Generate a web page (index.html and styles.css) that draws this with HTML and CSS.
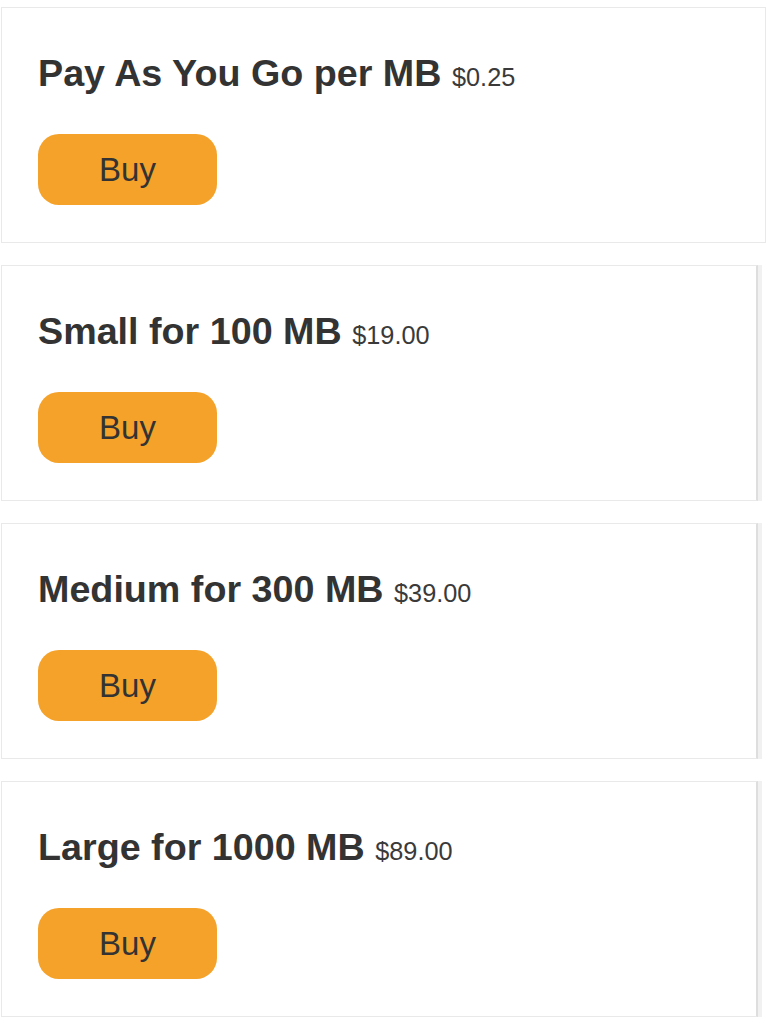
FILE: index.html
```html
<!DOCTYPE html>
<html lang="en">
<head>
<meta charset="utf-8">
<title>Data Plans</title>
<link rel="stylesheet" href="styles.css">
</head>
<body>
<main class="plans">
  <section class="plan">
    <h2 class="plan-title">Pay As You Go per MB <span class="plan-price">$0.25</span></h2>
    <button class="buy">Buy</button>
  </section>
  <section class="plan plan-scrolled">
    <h2 class="plan-title">Small for 100 MB <span class="plan-price">$19.00</span></h2>
    <button class="buy">Buy</button>
  </section>
  <section class="plan plan-scrolled">
    <h2 class="plan-title">Medium for 300 MB <span class="plan-price">$39.00</span></h2>
    <button class="buy">Buy</button>
  </section>
  <section class="plan plan-scrolled">
    <h2 class="plan-title">Large for 1000 MB <span class="plan-price">$89.00</span></h2>
    <button class="buy">Buy</button>
  </section>
</main>
</body>
</html>
```

FILE: styles.css
```css
html, body {
  margin: 0;
  padding: 0;
  background: #ffffff;
}

body {
  font-family: "Liberation Sans", Arial, sans-serif;
  color: #333333;
}

.plans {
  display: flex;
  flex-direction: column;
  gap: 22px;
  padding-top: 7px;
}

.plan {
  margin: 0 2px 0 1px;
  border: 1px solid #e9e9e9;
  padding: 44px 36px 37px 36px;
  display: flex;
  flex-direction: column;
  align-items: flex-start;
}

.plan-scrolled {
  margin-right: 10px;
  border-right: 2px solid #dedede;
  box-shadow: 4px 0 0 #f1f1f1;
}

.plan-title {
  margin: 0 0 40px 0;
  font-size: 37.7px;
  line-height: 42px;
  font-weight: 700;
  color: #333333;
}

.plan-price {
  font-size: 25.3px;
  line-height: 0;
  font-weight: 400;
  color: #3a3a3a;
}

.buy {
  width: 179px;
  height: 71px;
  border: none;
  border-radius: 21px;
  background: #f4a229;
  color: #333333;
  font-family: "Liberation Sans", Arial, sans-serif;
  font-size: 33px;
  padding: 0;
  cursor: pointer;
}
```
